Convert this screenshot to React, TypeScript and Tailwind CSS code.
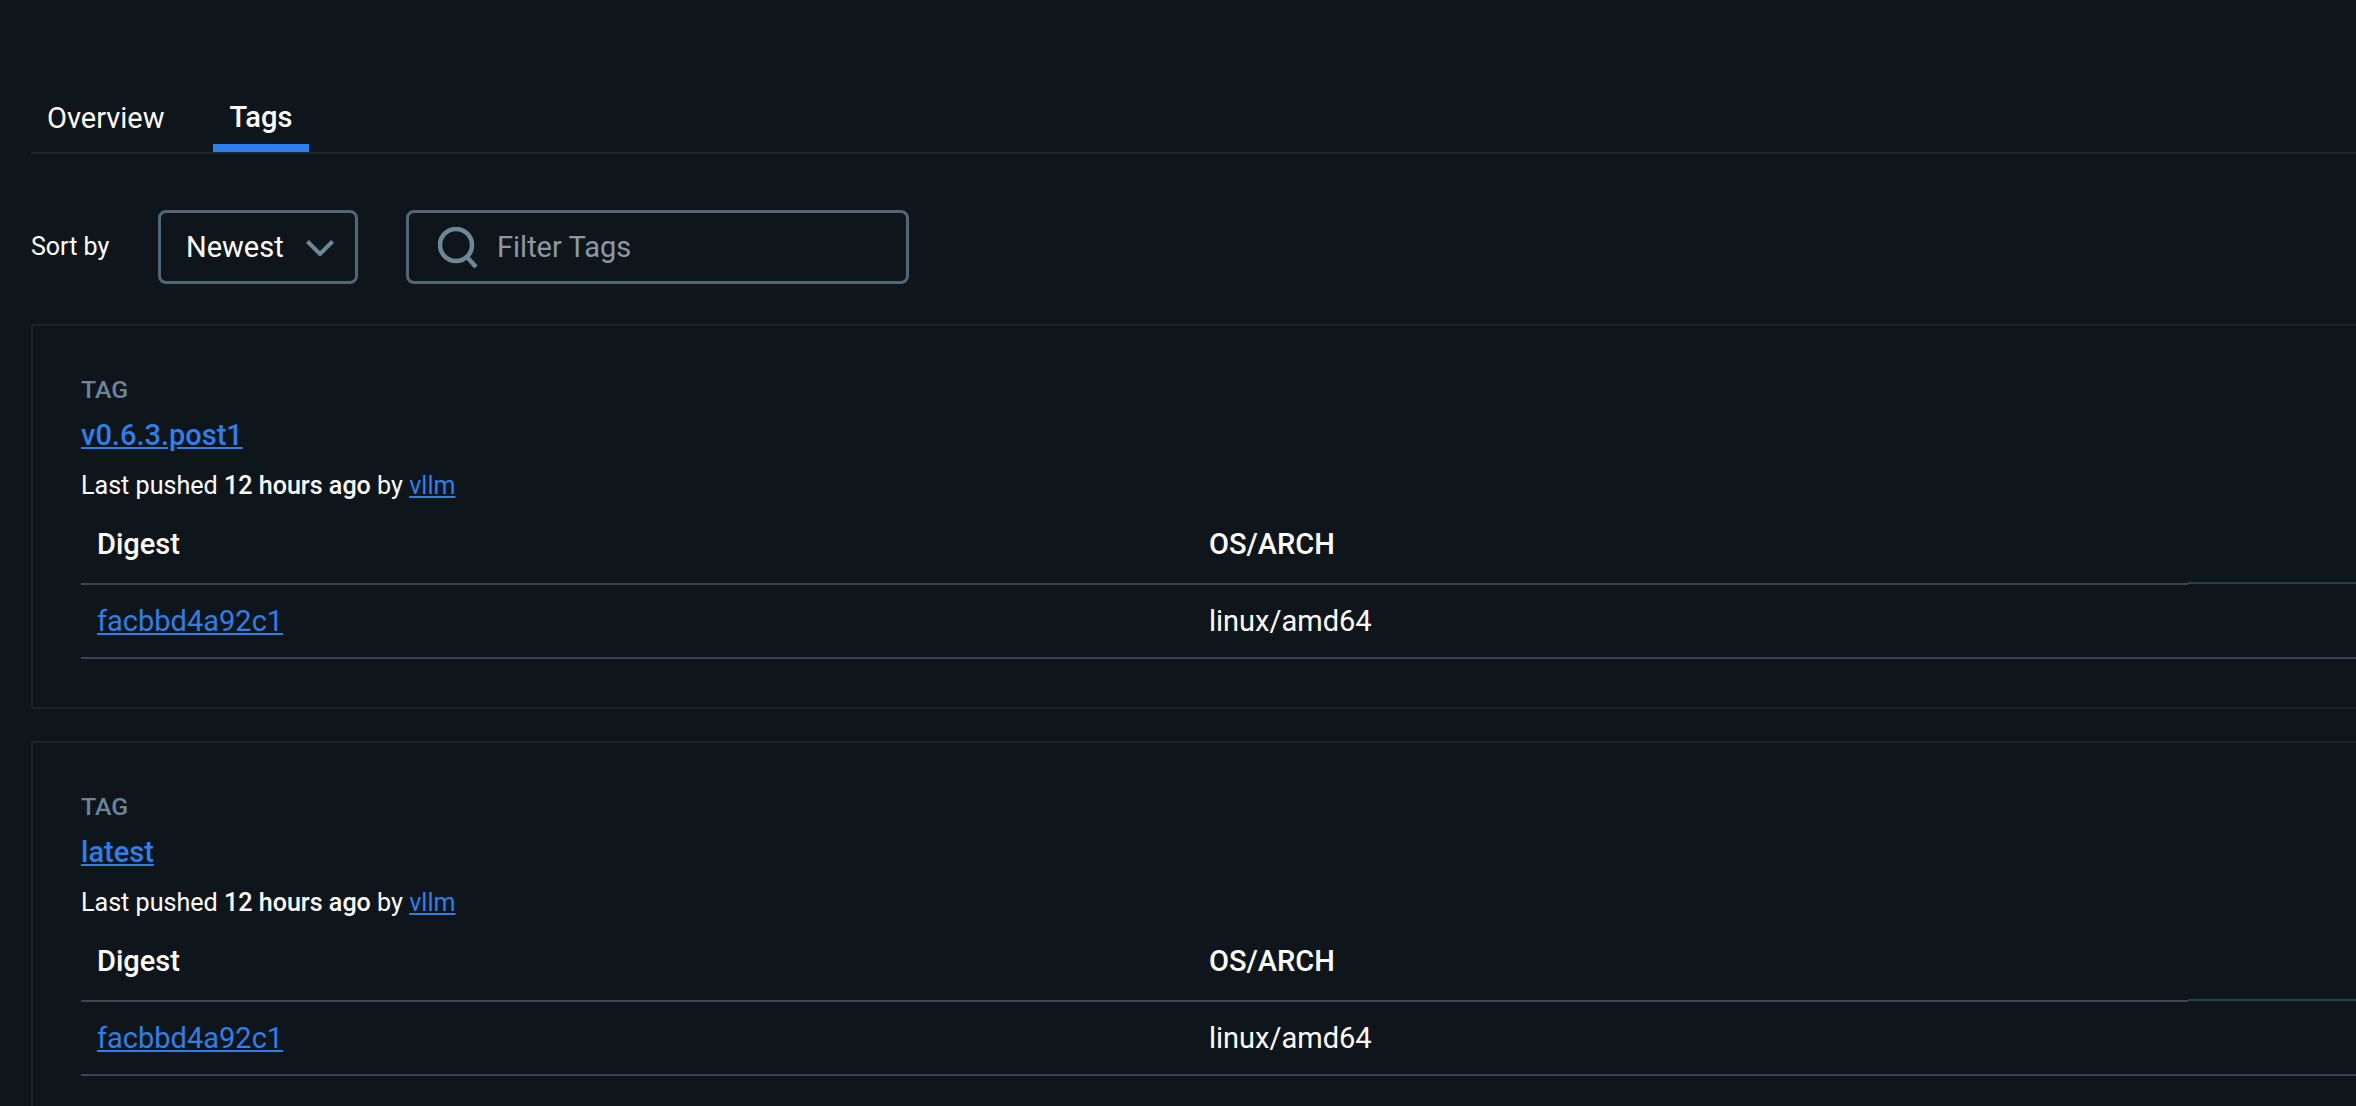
import React from 'react';

const tags = ['v0.6.3.post1', 'latest'];

function TagCard({ name }: { name: string }) {
    return (
        <section className="w-[2400px] h-[385px] shrink-0 border-2 border-[#1c2429] rounded-[3px] pt-[52px] pl-[48px]">
            <div className="text-[24.8px] leading-[24px] font-medium text-[#6c8497]">TAG</div>
            <a href="#" className="block mt-[12px] w-fit text-[29px] leading-[42px] font-medium text-[#2e7fe8] underline underline-offset-2">{name}</a>
            <p className="mt-[12px] text-[25.1px] leading-[36px] text-white">
                Last pushed <span className="font-medium">12 hours ago</span> by <a href="#" className="text-[#2e7fe8] underline underline-offset-2">vllm</a>
            </p>
            <div className="mt-[3px] flex text-[29px] font-medium text-white">
                <div className="w-[1112px] h-[78px] pl-4 flex items-center border-b-2 border-[#3b4650]">Digest</div>
                <div className="w-[995px] h-[78px] pl-4 flex items-center border-b-2 border-[#3b4650]">OS/ARCH</div>
                <div className="flex-1 h-[77px] border-b-2 border-[#26404f]"></div>
            </div>
            <div className="flex h-[74px] pt-[2px] items-center border-b-2 border-[#3a444f] text-[29px]">
                <div className="w-[1112px] pl-4"><a href="#" className="text-[#2e7fe8] underline underline-offset-2">facbbd4a92c1</a></div>
                <div className="pl-4 text-white">linux/amd64</div>
            </div>
        </section>
    );
}

export default function App() {
    return (
        <div className="h-screen overflow-hidden bg-[#0f161b] pl-[31px] pt-[80px] font-['Roboto',sans-serif]">
            <div className="w-[2400px] flex gap-[32px] border-b-2 border-[#1f272d] h-[74px]">
                <div className="h-[72px] px-4 pt-[6px] flex items-center text-[29px] font-normal text-white">Overview</div>
                <div className="h-[72px] px-[17px] flex items-center text-[29px] font-medium text-white border-b-[8px] border-[#2c7ff0] pt-[12px]">Tags</div>
            </div>

            <div className="mt-[56px] flex items-center h-[74px]">
                <span className="w-[127px] text-[25px] text-white">Sort by</span>
                <div className="w-[200px] h-[74px] border-[3px] border-[#4f6678] rounded-[8px] pl-[25px] pt-[1px] flex items-center text-[29px] text-white">
                    Newest
                    <svg className="ml-[22px]" width="28" height="16" viewBox="0 0 28 16" fill="none" stroke="#6d8798" strokeWidth="4">
                        <path d="M1.5 1.5 L14 14 L26.5 1.5" />
                    </svg>
                </div>
                <div className="ml-[48px] w-[503px] h-[74px] border-[3px] border-[#4f6678] rounded-[8px] pl-[29px] pt-[1px] flex items-center text-[29px] text-[#8a99a5]">
                    <svg className="mr-[17px]" width="42" height="42" viewBox="0 0 42 42" fill="none" stroke="#6d8798" strokeWidth="4.5">
                        <circle cx="18" cy="18" r="16" />
                        <path d="M29 30 L38 40" />
                    </svg>
                    Filter Tags
                </div>
            </div>

            <div className="mt-[40px] flex flex-col gap-[32px]">
                {tags.map(t => <TagCard key={t} name={t} />)}
            </div>
        </div>
    );
}
